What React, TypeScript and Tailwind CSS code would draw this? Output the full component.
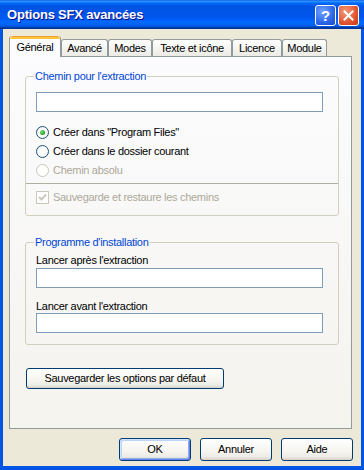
import type { ReactNode } from "react";

const font = "font-['Liberation_Sans','Arial',sans-serif]";

function Radio({ checked, disabled, children }: { checked?: boolean; disabled?: boolean; children: ReactNode }) {
  return <div className="flex h-[19px] items-center gap-[4px]">
    <span className={`flex h-[13px] w-[13px] shrink-0 items-center justify-center rounded-full border ${disabled ? "border-[#CAC8BB] bg-white" : "border-[#1C5180] bg-[linear-gradient(135deg,#DCDCD7_0%,#FFFFFF_35%,#FFFFFF_60%,#E8E8E0_100%)]"}`}>
      {checked ? <span className="h-[5px] w-[5px] rounded-full bg-[radial-gradient(circle_at_35%_35%,#7BE07A,#21A121_70%,#0A8A0A)]" /> : null}
    </span>
    <span className={disabled ? "text-[#ACA899]" : "text-black"}>{children}</span>
  </div>;
}

function Field() {
  return <div className="h-[20px] w-[287px] border border-[#7F9DB9] bg-white" />;
}

function Button({ children, def, className = "" }: { children: ReactNode; def?: boolean; className?: string }) {
  return <button type="button" className={`flex items-center justify-center rounded-[3px] border border-[#003C74] bg-[linear-gradient(to_bottom,#FFFFFF_0%,#F5F4EF_60%,#ECEBE6_85%,#D6D0C5_100%)] text-[11px] tracking-[-0.3px] text-black ${def ? "shadow-[inset_1px_1px_0_#CEE7FF,inset_-1px_-1px_0_#6982EE,inset_2px_2px_0_#BCD4F6,inset_-2px_-2px_0_#89ADE4]" : ""} ${className}`}>{children}</button>;
}

const tabs = [
  { label: "Avancé", w: "w-[47px]" },
  { label: "Modes", w: "w-[44px]" },
  { label: "Texte et icône", w: "w-[80px]" },
  { label: "Licence", w: "w-[50px]" },
  { label: "Module", w: "w-[45px]" },
];

export default function App() {
  return <div className={`flex h-[470px] w-[364px] flex-col bg-[#0054E3] text-[11px] leading-[13px] tracking-[-0.3px] ${font}`}>
    <div className="flex h-[29px] shrink-0 items-start bg-[linear-gradient(to_bottom,#0058EE_0%,#3593FF_4%,#288EFF_6%,#127DFF_8%,#036FFC_10%,#0262EE_14%,#0057E5_20%,#0054E3_24%,#0055EB_56%,#005BF5_66%,#026AFE_76%,#0062EF_86%,#0052D6_92%,#0040AB_94%,#003092_100%)] pl-[7px] pr-[5px]">
      <span className="mt-[7px] text-[13px] font-bold leading-[15px] tracking-[-0.2px] text-white [text-shadow:1px_1px_0_#0F1089]">Options SFX avancées</span>
      <div className="ml-auto mt-[5px] flex gap-[2px]">
        <span className="flex h-[21px] w-[21px] items-center justify-center rounded-[3px] border border-white bg-[radial-gradient(circle_at_35%_30%,#74A3FF,#2C67E8_60%,#1A48C8)] text-[15px] font-bold leading-none text-white">?</span>
        <span className="flex h-[21px] w-[21px] items-center justify-center rounded-[3px] border border-white bg-[radial-gradient(circle_at_35%_30%,#F49A7C,#E0552F_60%,#C43A16)]">
          <svg width="11" height="11" viewBox="0 0 11 11"><path d="M1.5 1.5L9.5 9.5M9.5 1.5L1.5 9.5" stroke="white" strokeWidth="2" strokeLinecap="square" /></svg>
        </span>
      </div>
    </div>

    <div className="flex flex-1 flex-col border-x-[3px] border-b-[4px] border-[#0055E5] bg-[#ECE9D8]">
      <div className="ml-[6px] mt-[7px] flex h-[20px] items-end">
        <div className="relative z-10 -mb-px flex h-[21px] w-[52px] flex-col overflow-hidden rounded-t-[3px] border-x border-[#919B9C] bg-[#FCFCFE]">
          <div className="h-[3px] rounded-t-[3px] bg-[linear-gradient(to_bottom,#E68B2C_0%,#FFC73C_50%,#FFC73C_100%)]" />
          <span className="pt-[2px] text-center">Général</span>
        </div>
        {tabs.map((t) => <div key={t.label} className={`flex h-[17px] ${t.w} items-start justify-center rounded-t-[3px] border border-b-0 border-[#919B9C] bg-[linear-gradient(to_bottom,#FFFFFF_0%,#F3F3EF_60%,#ECEBE5_100%)] pt-[2px]`}>{t.label}</div>)}
      </div>

      <div className="ml-[6px] flex h-[373px] w-[343px] flex-col border border-[#919B9C] bg-[linear-gradient(to_bottom,#FCFCFE_0%,#F4F3EE_100%)] pl-[15px]">
        <fieldset className="mt-[12px] w-[314px] rounded-[3px] border border-[#D0D0BF] pb-[8px] pl-[10px] pr-[15px]">
          <legend className="-ml-[2px] px-[1px] leading-[14px] text-[#0046D5]">Chemin pour l'extraction</legend>
          <div className="pt-[9px]"><Field /></div>
          <div className="mt-[11px]">
            <Radio checked>Créer dans "Program Files"</Radio>
            <Radio>Créer dans le dossier courant</Radio>
            <Radio disabled>Chemin absolu</Radio>
          </div>
          <div className="-ml-[10px] -mr-[15px] mt-[3px] h-px bg-[#B0AEA3]" />
          <div className="mt-[4px] flex h-[19px] items-center gap-[4px]">
            <span className="flex h-[13px] w-[13px] items-center justify-center border border-[#CAC8BB] bg-white">
              <svg width="9" height="9" viewBox="0 0 9 9"><path d="M1 4L3.5 6.5L8 1.5" fill="none" stroke="#CAC8BB" strokeWidth="2" /></svg>
            </span>
            <span className="text-[#ACA899]">Sauvegarde et restaure les chemins</span>
          </div>
        </fieldset>

        <fieldset className="mt-[19px] w-[314px] rounded-[3px] border border-[#D0D0BF] pb-[11px] pl-[10px] pr-[15px]">
          <legend className="-ml-[2px] px-[1px] leading-[14px] text-[#0046D5]">Programme d'installation</legend>
          <div className="mt-[5px]">Lancer après l'extraction</div>
          <div className="mt-[1px]"><Field /></div>
          <div className="mt-[12px]">Lancer avant l'extraction</div>
          <Field />
        </fieldset>

        <Button className="ml-[1px] mt-[23px] h-[21px] w-[198px]">Sauvegarder les options par défaut</Button>
      </div>

      <div className="mt-[9px] flex justify-end gap-[9px] pr-[8px]">
        <Button def className="h-[23px] w-[72px]">OK</Button>
        <Button className="h-[23px] w-[72px]">Annuler</Button>
        <Button className="h-[23px] w-[72px]">Aide</Button>
      </div>
    </div>
  </div>;
}
